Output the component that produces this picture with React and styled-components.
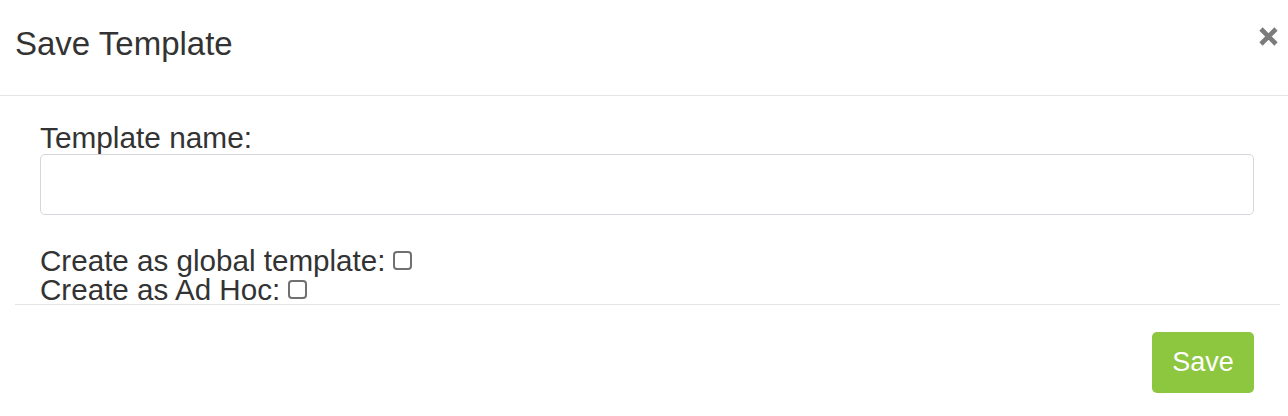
import React from "react";
import styled, { createGlobalStyle } from "styled-components";

const GlobalStyle = createGlobalStyle`
  html, body {
    margin: 0;
    padding: 0;
    background: #ffffff;
  }
  body {
    font-family: "Liberation Sans", Arial, Helvetica, sans-serif;
    color: #333333;
  }
`;

const Dialog = styled.div`
  width: 1288px;
  height: 416px;
  background: #ffffff;
  overflow: hidden;
`;

const Header = styled.div`
  box-sizing: border-box;
  height: 96px;
  display: flex;
  justify-content: space-between;
  align-items: flex-start;
  padding: 26px 10px 0 15px;
  border-bottom: 1px solid #e5e5e5;
`;

const Title = styled.h4`
  margin: 0;
  font-size: 33px;
  font-weight: 400;
  line-height: 1.1;
  color: #333333;
`;

const CloseButton = styled.button`
  border: 0;
  padding: 0;
  margin-top: 1px;
  background: transparent;
  width: 19px;
  height: 19px;
  cursor: pointer;
  svg {
    display: block;
  }
`;

const Body = styled.div`
  padding: 27px 34px 0 40px;
`;

const FieldLabel = styled.label`
  display: block;
  font-size: 29.8px;
  line-height: 30px;
  margin-bottom: 1px;
`;

const TextField = styled.input`
  box-sizing: border-box;
  display: block;
  width: 100%;
  height: 61px;
  border: 1px solid #d3d6db;
  border-radius: 5px;
  padding: 0 12px;
  font-size: 24px;
  font-family: inherit;
  outline: none;
`;

const Options = styled.div`
  margin-top: 31px;
`;

const CheckRow = styled.label`
  display: block;
  font-size: 29.6px;
  line-height: 29px;
  white-space: nowrap;
`;

const Check = styled.input`
  appearance: none;
  box-sizing: border-box;
  display: inline-block;
  width: 19px;
  height: 19px;
  margin: 0 0 1px 8px;
  border: 2px solid #707070;
  border-radius: 4px;
  background: #ffffff;
  vertical-align: baseline;
  &:checked {
    background: #0075ff;
    border-color: #0075ff;
  }
`;

const Footer = styled.div`
  display: flex;
  justify-content: flex-end;
  margin: 0 8px 0 15px;
  padding: 27px 26px 0 0;
  border-top: 1px solid #e5e5e5;
`;

const SaveButton = styled.button`
  box-sizing: border-box;
  height: 61px;
  width: 102px;
  border: 0;
  border-radius: 5px;
  background: #8dc63f;
  color: #ffffff;
  font-family: inherit;
  font-size: 27px;
  cursor: pointer;
`;

const CloseIcon = () => (
  <svg width="19" height="19" viewBox="0 0 19 19">
    <path
      d="M2 2 L17 17 M17 2 L2 17"
      stroke="#7b7b7b"
      strokeWidth="4.6"
      strokeLinecap="butt"
      fill="none"
    />
  </svg>
);

const App = () => {
  return (
    <>
      <GlobalStyle />
      <Dialog>
        <Header>
          <Title>Save Template</Title>
          <CloseButton type="button" aria-label="Close">
            <CloseIcon />
          </CloseButton>
        </Header>
        <Body>
          <FieldLabel htmlFor="templateName">Template name:</FieldLabel>
          <TextField id="templateName" type="text" />
          <Options>
            <CheckRow>
              Create as global template:
              <Check type="checkbox" />
            </CheckRow>
            <CheckRow>
              Create as Ad Hoc:
              <Check type="checkbox" />
            </CheckRow>
          </Options>
        </Body>
        <Footer>
          <SaveButton type="button">Save</SaveButton>
        </Footer>
      </Dialog>
    </>
  );
};

export default App;
